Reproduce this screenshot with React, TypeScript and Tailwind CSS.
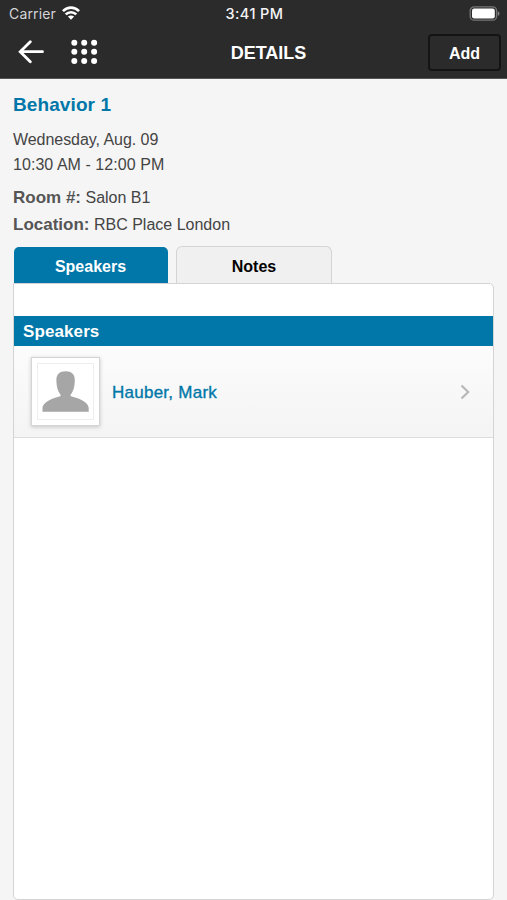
import type { ReactNode } from 'react';

interface Speaker {
  name: string;
}

const speakers: Speaker[] = [{ name: 'Hauber, Mark' }];

const columns = [3.3, 13.2, 23.1];
const rows = [3.7, 12.8, 21.9];

function StatusBar() {
  return (
    <div className="grid h-[27px] grid-cols-3 items-center pr-[7px] pl-[9px] font-['Inter',sans-serif] text-[14px] leading-[27px] text-zinc-100">
      <div className="flex items-center gap-[6px] text-zinc-300">
        <span className="tracking-[0.15px]">Carrier</span>
        <svg className="mb-[2px]" width="18" height="14" viewBox="0 0 19 14" fill="none" stroke="white" strokeWidth="2.8">
          <path d="M1 5C6 0.200 13 0.200 18 5" />
          <path d="M3.900 8.500c3.200-3.100 8-3.100 11.200 0" />
          <path d="M6.2 10.800c1.900-1.700 4.700-1.700 6.600 0L9.5 14z" fill="white" stroke="none" />
        </svg>
      </div>
      <span className="text-center text-[14.5px] font-medium tracking-[0.4px]">3:41 PM</span>
      <svg className="justify-self-end" width="31" height="15" viewBox="0 0 31 15" fill="none">
        <rect x="1.2" y="0.8" width="26.4" height="13.4" rx="4" stroke="#777" strokeWidth="1.3" />
        <rect x="3" y="2.6" width="22.8" height="9.8" rx="2.2" fill="white" />
        <path d="M28.8 5.2c2.2.8 2.2 3.8 0 4.6z" fill="#888" />
      </svg>
    </div>
  );
}

function Header() {
  return (
    <header className="h-[79px] border-b border-[#555] bg-[#2b2b2b]">
      <StatusBar />
      <div className="grid h-[51px] grid-cols-3 items-center pr-[6px] pl-[18px]">
        <div className="flex items-center gap-[26px] pb-[2px]">
          <button type="button" aria-label="Back">
            <svg width="27" height="24" viewBox="0 0 27 24" fill="none" stroke="white" strokeWidth="2.8" strokeLinecap="round">
              <path d="M24.500 11.700H2.500M12.300 1.700L2.200 11.700l10.100 10" />
            </svg>
          </button>
          <button type="button" aria-label="Menu">
            <svg width="27" height="26" viewBox="0 0 27 26" fill="white">
              {rows.map((y) => columns.map((x) => <circle key={`${x}-${y}`} cx={x} cy={y} r="3" />))}
            </svg>
          </button>
        </div>
        <h1 className="pt-[2px] pl-[18px] text-center text-[18px] font-bold text-white">DETAILS</h1>
        <button
          type="button"
          className="h-[37px] w-[73px] justify-self-end rounded-[4px] border-2 border-[#141414] pt-[2px] text-[16px] font-bold text-white"
        >
          Add
        </button>
      </div>
    </header>
  );
}

function Field({ label, children }: { label: string; children: ReactNode }) {
  return (
    <p className="text-[16px] leading-[27px]">
      <span className="text-[17px] font-bold text-[#555]">{label}</span> {children}
    </p>
  );
}

function SpeakerRow({ speaker }: { speaker: Speaker }) {
  return (
    <li className="flex h-[92px] items-center border-b border-[#ddd] bg-linear-to-b from-[#fcfcfc] to-[#f4f4f4] pr-[22px] pl-[17px]">
      <div className="size-[69px] border border-[#d5d5d5] bg-white p-[5px] shadow-[0_1px_4px_rgba(0,0,0,0.2)]">
        <div className="size-[57px] border border-[#eee]">
          <svg width="55" height="55" viewBox="0 0 55 55" fill="#a6a6a6">
            <path d="M27.600 7.200c6 0 9.200 2.800 9.200 8.800 0 6.500-1.400 10.500-3 13-.8 1.200-1.300 2-1.300 3 3.500 1.500 7.500 2 11.500 4.300 4.800 2.700 6.700 5.200 6.700 8.200v3.200H4.500v-3.200c0-3 1.900-5.500 6.700-8.200 4-2.300 8-2.800 11.500-4.300 0-1-.5-1.800-1.300-3-1.600-2.500-3-6.500-3-13 0-6 3.200-8.800 9.200-8.800z" />
          </svg>
        </div>
      </div>
      <span className="ml-[12px] flex-1 pt-[2px] text-[17px] tracking-[0.25px] text-[#0077a8] [-webkit-text-stroke:0.35px_#0077a8]">
        {speaker.name}
      </span>
      <svg width="12" height="16" viewBox="0 0 12 16" fill="none" stroke="#b8b8b8" strokeWidth="2.2">
        <path d="M2.500 1.500L9.200 8l-6.700 6.500" />
      </svg>
    </li>
  );
}

export default function App() {
  return (
    <div className="flex h-[900px] w-full flex-col overflow-hidden bg-[#f5f5f5] font-['Liberation_Sans',Arial,sans-serif] text-[#444]">
      <Header />
      <main className="flex flex-1 flex-col px-[13px]">
        <section className="pt-[13px]">
          <h2 className="text-[19px] leading-[26px] font-bold tracking-[0.1px] text-[#0077a8]">Behavior 1</h2>
          <div className="mt-[9px] text-[16px] leading-[25px]">
            <p className="tracking-[-0.05px]">Wednesday, Aug. 09</p>
            <p className="tracking-[0.05px]">10:30 AM - 12:00 PM</p>
          </div>
          <div className="mt-[7px]">
            <Field label="Room #:">Salon B1</Field>
            <Field label="Location:">RBC Place London</Field>
          </div>
        </section>

        <div className="mt-[8px] flex h-[37px] items-end gap-[8px] pl-px text-[16px] font-bold">
          <button type="button" className="h-[36px] w-[154px] rounded-t-[5px] bg-[#0077a8] pt-[4px] pr-px text-white">
            Speakers
          </button>
          <button
            type="button"
            className="h-[37px] w-[156px] rounded-t-[6px] border border-b-0 border-[#d4d4d4] bg-[#f0f0f0] pt-[4px] text-black"
          >
            Notes
          </button>
        </div>

        <section className="flex-1 rounded-b-[5px] rounded-tr-[5px] border border-[#d4d4d4] bg-white pt-[32px]">
          <h3 className="h-[30px] bg-[#0077a8] pl-[9px] text-[17px] leading-[31px] font-bold tracking-[0.1px] text-white">
            Speakers
          </h3>
          <ul>
            {speakers.map((speaker) => (
              <SpeakerRow key={speaker.name} speaker={speaker} />
            ))}
          </ul>
        </section>
      </main>
    </div>
  );
}
